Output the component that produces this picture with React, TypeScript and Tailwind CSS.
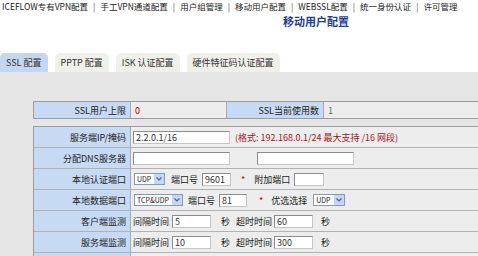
import React from "react"

const navItems = [
	"ICEFLOW专有VPN配置",
	"手工VPN通道配置",
	"用户组管理",
	"移动用户配置",
	"WEBSSL配置",
	"统一身份认证",
	"许可管理",
]

const tabs = ["SSL 配置", "PPTP 配置", "ISK 认证配置", "硬件特征码认证配置"]

const Field = ({ value = "", w }: { value?: string; w: string }) => (
	<input
		readOnly
		value={value}
		className={`h-[13px] ${w} shrink-0 border border-[#8c8c8c] border-r-[#c4c4c4] border-b-[#c4c4c4] bg-white px-[2px] text-[9px] leading-[11px] text-[#333] outline-none`}
	/>
)

const Dropdown = ({ value, w }: { value: string; w: string }) => (
	<div className={`flex h-[12px] ${w} shrink-0 items-center border border-[#7f9db9] bg-white`}>
		<span className="flex-1 pl-[2px] text-[7px] leading-none text-[#222]">{value}</span>
		<span className="flex h-full w-[10px] items-center justify-center bg-[#c6d6f7]">
			<svg width="6" height="4" viewBox="0 0 6 4" fill="none">
				<path d="M0.5 0.5 L3 3 L5.5 0.5" stroke="#4b6290" strokeWidth="1.2" />
			</svg>
		</span>
	</div>
)

const Star = ({ className }: { className: string }) => (
	<span className={`${className} text-[9px] text-[#c00000]`}>*</span>
)

const Label = ({ children }: { children?: React.ReactNode }) => (
	<div className="flex w-[97px] shrink-0 items-center justify-end border-r border-[#a9a9a9] bg-[#c7daf3] pr-[4px] text-[#222]">
		{children}
	</div>
)

const Row = ({ label, children }: { label?: string; children?: React.ReactNode }) => (
	<div className="flex h-[21px] border-b border-[#b2b2b2]">
		<Label>{label}</Label>
		<div className="flex flex-1 items-center bg-[#ededed] pl-[2px] text-[#222]">{children}</div>
	</div>
)

export default function App() {
	return (
		<div className="flex h-[256px] w-[478px] flex-col overflow-hidden bg-white font-['Noto_Sans_CJK_SC',sans-serif] text-[9px] leading-none">
			<div className="flex h-[13px] shrink-0 items-center gap-[5px] whitespace-nowrap pl-[2px] text-[8.5px] leading-[13px] text-[#222]">
				{navItems.map((item, i) => (
					<React.Fragment key={item}>
						{i > 0 && <span className="text-[#444]">|</span>}
						<span>{item}</span>
					</React.Fragment>
				))}
			</div>

			<div className="mt-[1px] h-[14px] shrink-0 pl-[283px] text-[11px] leading-[14px] font-bold text-[#1c3d9c]">
				移动用户配置
			</div>

			<div className="mt-[25px] flex h-[19px] shrink-0 gap-[7px]">
				{tabs.map((tab, i) => (
					<div
						key={tab}
						className={`flex items-center rounded-t-[5px] px-[6px] text-[#333] ${i === 0 ? "bg-[#c3d7f2]" : "bg-[#f0f0ea]"}`}
					>
						{tab}
					</div>
				))}
			</div>

			<div className="flex-1 shrink-0 bg-[#e6e6e6] pt-[29px] pl-[33px]">
				<div className="flex h-[18px] w-[460px] border border-[#9c9c9c]">
					<Label>SSL用户上限</Label>
					<div className="flex w-[96px] shrink-0 items-center border-r border-[#a9a9a9] bg-[#ededed] pl-[4px] text-[#c00000]">
						0
					</div>
					<Label>SSL当前使用数</Label>
					<div className="flex flex-1 items-center bg-[#ededed] pl-[4px] text-[#2b8a2b]">1</div>
				</div>

				<div className="mt-[7px] w-[460px] border-t border-l border-[#9c9c9c]">
					<Row label="服务端IP/掩码">
						<Field value="2.2.0.1/16" w="w-[97px]" />
						<span className="ml-[5px] whitespace-nowrap text-[#a31515]">
							(格式: 192.168.0.1/24 最大支持 /16 网段)
						</span>
					</Row>
					<Row label="分配DNS服务器">
						<Field w="w-[97px]" />
						<Field w="w-[97px] ml-[27px]" />
					</Row>
					<Row label="本地认证端口">
						<Dropdown value="UDP" w="w-[31px] ml-[1px]" />
						<span className="ml-[6px]">端口号</span>
						<Field value="9601" w="w-[29px] ml-[4px]" />
						<Star className="ml-[10px]" />
						<span className="ml-[9px]">附加端口</span>
						<Field w="w-[30px] ml-[4px]" />
					</Row>
					<Row label="本地数据端口">
						<Dropdown value="TCP&UDP" w="w-[49px] ml-[1px]" />
						<span className="ml-[5px]">端口号</span>
						<Field value="81" w="w-[28px] ml-[4px]" />
						<Star className="ml-[12px]" />
						<span className="ml-[8px]">优选选择</span>
						<Dropdown value="UDP" w="w-[32px] ml-[6px]" />
					</Row>
					<Row label="客户端监测">
						<span>间隔时间</span>
						<Field value="5" w="w-[39px] ml-[3px]" />
						<span className="ml-[10px]">秒</span>
						<span className="ml-[6px]">超时时间</span>
						<Field value="60" w="w-[39px] ml-[2px]" />
						<span className="ml-[8px]">秒</span>
					</Row>
					<Row label="服务端监测">
						<span>间隔时间</span>
						<Field value="10" w="w-[39px] ml-[3px]" />
						<span className="ml-[10px]">秒</span>
						<span className="ml-[6px]">超时时间</span>
						<Field value="300" w="w-[39px] ml-[2px]" />
						<span className="ml-[8px]">秒</span>
					</Row>
					<Row />
				</div>
			</div>
		</div>
	)
}
